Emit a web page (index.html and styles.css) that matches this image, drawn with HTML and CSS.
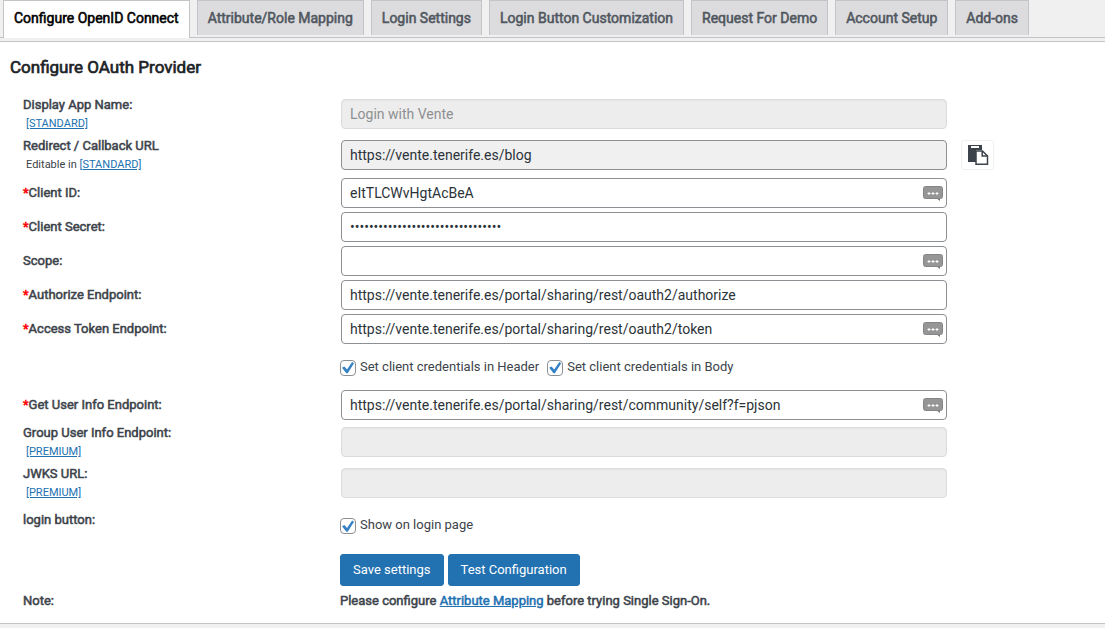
FILE: index.html
```html
<!DOCTYPE html>
<html lang="en">
<head>
<meta charset="utf-8">
<title>Configure OpenID Connect</title>
<link rel="stylesheet" href="styles.css">
</head>
<body>
<svg class="sprite" aria-hidden="true">
  <symbol id="hint" viewBox="0 0 20 15">
    <path d="M13 12h4v3z" fill="#777"/>
    <path d="M2.500 .5h15q2 0 2 2v8q0 2-2 2h-15q-2 0-2-2v-8q0-2 2-2z" fill="#969696" stroke="#858585"/>
    <path d="M4.500 7.500h3M6 6v3M8.500 7.500h3M10 6v3M12.500 7.500h3M14 6v3" stroke="#fff" fill="none"/>
  </symbol>
</svg>
<nav class="tabs">
  <a class="tab active" href="#connect">Configure OpenID Connect</a>
  <a class="tab" href="#mapping">Attribute/Role Mapping</a>
  <a class="tab" href="#login">Login Settings</a>
  <a class="tab" href="#button">Login Button Customization</a>
  <a class="tab" href="#demo">Request For Demo</a>
  <a class="tab" href="#account">Account Setup</a>
  <a class="tab" href="#addons">Add-ons</a>
</nav>
<main class="panel">
  <h1 class="title">Configure OAuth Provider</h1>
  <form class="form">
    <div class="row tall">
      <div class="name"><label for="app">Display App Name:</label><small class="plan"><a href="#standard">[STANDARD]</a></small></div>
      <div class="field"><input class="text" id="app" type="text" value="Login with Vente" disabled></div>
    </div>
    <div class="row tall">
      <div class="name"><label for="redirect">Redirect / Callback URL</label><small class="plan">Editable in <a href="#standard">[STANDARD]</a></small></div>
      <div class="field"><input class="text" id="redirect" type="text" value="https://vente.tenerife.es/blog" readonly></div>
      <button class="copy" type="button" aria-label="Copy URL">
        <svg width="22" height="22" viewBox="0 0 22 22">
          <path d="M1 1h14v5H9v12H1z" fill="#3c434a"/>
          <path d="M4 3h8" stroke="#fff" stroke-width="2"/>
          <path d="M9 7h6.500l5 5v8.300H9z" fill="#fff" stroke="#3c434a" stroke-width="1.500"/>
          <path d="M15.200 7v5h5.300" fill="none" stroke="#3c434a" stroke-width="1.500"/>
        </svg>
      </button>
    </div>
    <div class="row">
      <label class="name" for="client"><span class="req">*</span>Client ID:</label>
      <div class="field"><input class="text" id="client" type="text" value="eItTLCWvHgtAcBeA"><svg class="hint"><use href="#hint"/></svg></div>
    </div>
    <div class="row">
      <label class="name" for="secret"><span class="req">*</span>Client Secret:</label>
      <div class="field"><input class="text" id="secret" type="password" value="abcdefghijklmnopqrstuvwxyz012345"></div>
    </div>
    <div class="row">
      <label class="name" for="scope">Scope:</label>
      <div class="field"><input class="text" id="scope" type="text"><svg class="hint"><use href="#hint"/></svg></div>
    </div>
    <div class="row">
      <label class="name" for="authorize"><span class="req">*</span>Authorize Endpoint:</label>
      <div class="field"><input class="text" id="authorize" type="text" value="https://vente.tenerife.es/portal/sharing/rest/oauth2/authorize"></div>
    </div>
    <div class="row">
      <label class="name" for="token"><span class="req">*</span>Access Token Endpoint:</label>
      <div class="field"><input class="text" id="token" type="text" value="https://vente.tenerife.es/portal/sharing/rest/oauth2/token"><svg class="hint"><use href="#hint"/></svg></div>
    </div>
    <div class="row credentials">
      <div class="checks">
        <label class="check"><input class="box" type="checkbox" checked><span>Set client credentials in Header</span></label>
        <label class="check"><input class="box" type="checkbox" checked><span>Set client credentials in Body</span></label>
      </div>
    </div>
    <div class="row">
      <label class="name" for="userinfo"><span class="req">*</span>Get User Info Endpoint:</label>
      <div class="field"><input class="text" id="userinfo" type="text" value="https://vente.tenerife.es/portal/sharing/rest/community/self?f=pjson"><svg class="hint"><use href="#hint"/></svg></div>
    </div>
    <div class="row tall">
      <div class="name"><label for="group">Group User Info Endpoint:</label><small class="plan"><a href="#premium">[PREMIUM]</a></small></div>
      <div class="field"><input class="text" id="group" type="text" disabled></div>
    </div>
    <div class="row tall">
      <div class="name"><label for="jwks">JWKS URL:</label><small class="plan"><a href="#premium">[PREMIUM]</a></small></div>
      <div class="field"><input class="text" id="jwks" type="text" disabled></div>
    </div>
    <div class="row login">
      <div class="name">login button:</div>
      <div class="checks">
        <label class="check"><input class="box" type="checkbox" checked><span>Show on login page</span></label>
      </div>
    </div>
    <div class="row actions">
      <div class="buttons">
        <button class="primary" type="button">Save settings</button>
        <button class="primary" type="button">Test Configuration</button>
      </div>
    </div>
    <div class="row note">
      <div class="name">Note:</div>
      <p class="message">Please configure <a href="#mapping">Attribute Mapping</a> before trying Single Sign-On.</p>
    </div>
  </form>
</main>
</body>
</html>
```
FILE: styles.css
```css
* { box-sizing: border-box; }
body {
  margin: 0;
  background: #f0f0f1;
  color: #3c434a;
  font: 13px/18px Roboto, sans-serif;
}
a { color: #2271b1; }
.sprite { display: none; }

.tabs {
  display: flex;
  align-items: flex-start;
  gap: 7px;
  padding-left: 3px;
  border-bottom: 1px solid #c3c4c7;
}
.tab {
  height: 35px;
  padding: 5px 10px;
  border: 1px solid #c3c4c7;
  border-bottom: 0;
  background: #dcdcde;
  color: #50575e;
  font-size: 14px;
  line-height: 25px;
  text-decoration: none;
  white-space: nowrap;
  margin-bottom: 2px;
}
.tab.active {
  height: 38px;
  margin-bottom: -1px;
  background: #fff;
  color: #000;
}

.tab, .title, .name, .message { -webkit-text-stroke: 0.04em currentColor; }

.panel {
  margin-top: 3px;
  padding: 12px 0 12px;
  border: 1px solid #c3c4c7;
  border-width: 1px 0;
  background: #fff;
}
.title {
  margin: 0 10px 14px;
  color: #1d2327;
  font-size: 17px;
  font-weight: 400;
  line-height: 26px;
}
.row {
  display: grid;
  grid-template-columns: 317fr 607fr 158fr;
  align-items: center;
  min-height: 34px;
  padding-left: 23px;
}
.row.tall { min-height: 41px; padding-bottom: 1px; }
.name label { display: block; }
.plan {
  display: block;
  padding: 1px 0 0 3px;
  font-size: 11px;
  -webkit-text-stroke: 0;
}
.req { color: #f00; }

.field { position: relative; padding-left: 1px; }
.text {
  display: block;
  width: 100%;
  height: 30px;
  padding: 0 8px;
  border: 1px solid #8c8f94;
  border-radius: 4px;
  background: #fff;
  color: #2c3338;
  font: 14px Roboto, sans-serif;
}
.text:read-only { background: #f0f0f1; }
.text:disabled {
  border-color: #dcdcde;
  background: #ededed;
  color: #8d9092;
  box-shadow: inset 0 1px 2px rgba(0, 0, 0, .04);
}
.hint {
  position: absolute;
  top: 8px;
  right: 4px;
  width: 20px;
  height: 15px;
}
.copy {
  display: grid;
  place-items: center;
  width: 33px;
  height: 30px;
  margin-left: 14px;
  padding: 0;
  border: 1px solid #f0f0f1;
  border-radius: 3px;
  background: #fff;
}

.checks {
  display: flex;
  grid-column: 2 / 4;
  gap: 8px;
}
.check { display: flex; align-items: center; gap: 4px; }
.box {
  display: grid;
  place-items: center;
  width: 16px;
  height: 16px;
  margin: 2px 0 0;
  border: 1px solid #8c8f94;
  border-radius: 4px;
  background: #fff;
  appearance: none;
}
.box:checked::before {
  content: "";
  width: 12px;
  height: 12px;
  background: #3582c4;
  clip-path: polygon(0 52%, 20% 42%, 42% 66%, 84% 4%, 100% 14%, 48% 98%, 36% 98%);
}

.credentials { min-height: 42px; padding-bottom: 1px; }
.login { min-height: 46px; align-items: start; padding-top: 7px; }
.login .checks { padding-top: 5px; }
.actions { min-height: 40px; }
.buttons { display: flex; grid-column: 2 / 4; gap: 4px; }
.primary {
  height: 32px;
  padding: 0 12px 1px;
  border: 1px solid #2271b1;
  border-radius: 3px;
  background: #2271b1;
  color: #fff;
  font: 13px Roboto, sans-serif;
}
.note { min-height: 21px; }
.message { grid-column: 2 / 4; margin: 0; }
```
